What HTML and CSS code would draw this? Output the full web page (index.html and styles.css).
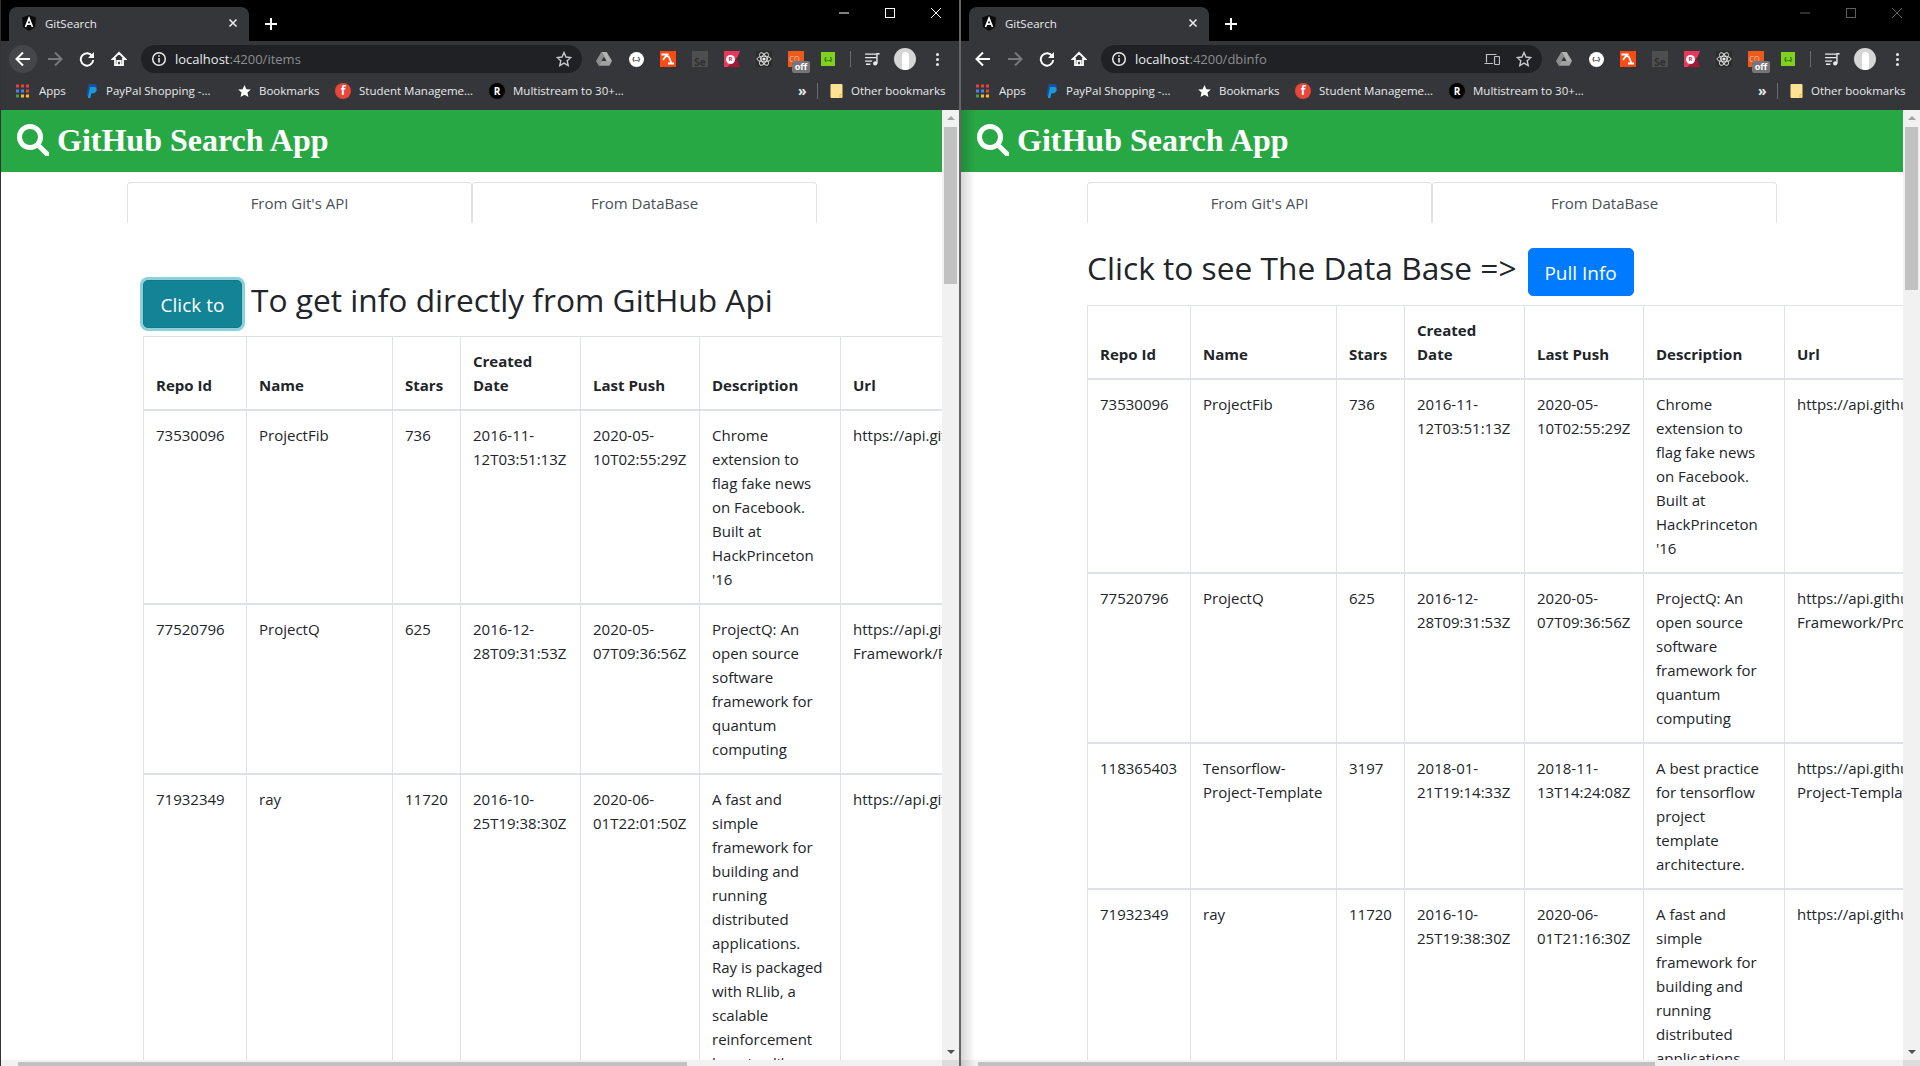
FILE: index.html
```html
<!DOCTYPE html>
<html lang="en">
<head>
<meta charset="utf-8">
<title>GitSearch</title>
<link rel="stylesheet" href="styles.css">
</head>
<body>
<svg class="defs" xmlns="http://www.w3.org/2000/svg">
  <symbol id="i-ng" viewBox="0 0 16 16"><path d="M8 0 1 2.500 2 12l6 4 6-4 1-9.500z" fill="#0b0b0b"/><path d="M4.500 12 8 3.200 11.500 12M5.700 9.200h4.600" fill="none" stroke="#fff" stroke-width="1.700"/></symbol>
  <symbol id="i-x" viewBox="0 0 10 10"><path d="M1.500 1.500l7 7M8.500 1.500l-7 7" stroke="#e8eaed" stroke-width="1.600" fill="none"/></symbol>
  <symbol id="i-plus" viewBox="0 0 14 14"><path d="M7 1v12M1 7h12" stroke="#fff" stroke-width="2" fill="none"/></symbol>
  <symbol id="i-back" viewBox="0 0 16 16"><path d="M15 8H2M8 1.500 1.500 8 8 14.500" fill="none" stroke="currentColor" stroke-width="2"/></symbol>
  <symbol id="i-fwd" viewBox="0 0 16 16"><path d="M1 8h13M8 1.500 14.500 8 8 14.500" fill="none" stroke="currentColor" stroke-width="2"/></symbol>
  <symbol id="i-reload" viewBox="0 0 16 16"><path d="M13.300 5.200A6.200 6.200 0 1 0 14.200 9" fill="none" stroke="currentColor" stroke-width="2"/><path d="M15 1v6H9z" fill="currentColor"/></symbol>
  <symbol id="i-home" viewBox="0 0 18 18"><path d="M9 2 2 9h2.500v7h9V9H16zM7 16v-5h4v5" fill="none" stroke="currentColor" stroke-width="2" stroke-linejoin="miter"/></symbol>
  <symbol id="i-info" viewBox="0 0 16 16"><circle cx="8" cy="8" r="6.300" fill="none" stroke="currentColor" stroke-width="1.500"/><path d="M8 7v4.500M8 4.200v1.500" stroke="currentColor" stroke-width="1.600"/></symbol>
  <symbol id="i-star" viewBox="0 0 16 16"><path d="M8 1.500l2 4.500 4.800.5-3.600 3.200 1 4.800L8 12.100 3.800 14.500l1-4.800L1.200 6.500 6 6z" fill="none" stroke="currentColor" stroke-width="1.400"/></symbol>
  <symbol id="i-device" viewBox="0 0 16 14"><path d="M2.500 10.500V2.500h10M.5 11.500h8.500" fill="none" stroke="#bdc1c6" stroke-width="1.200"/><rect x="10.500" y="4.500" width="5" height="8" rx=".8" fill="none" stroke="#bdc1c6" stroke-width="1.200"/></symbol>
  <symbol id="i-drive" viewBox="0 0 16 14"><path d="M5.300 0h5.400l5.300 9h-5.400z" fill="#b0b0b0"/><path d="M5.300 0 8 4.600 2.700 13.800 0 9z" fill="#8e8e8e"/><path d="M5.400 9H16l-2.700 4.800H2.700z" fill="#a0a0a0"/></symbol>
  <symbol id="i-slash" viewBox="0 0 16 16"><rect width="16" height="16" fill="#ff4a12"/><path d="M1.500 3.500h5.500L3 9M8 3l-1.500 3M8.500 5l3 7.500M8 12.500h6" fill="none" stroke="#fff" stroke-width="1.800"/></symbol>
  <symbol id="i-react" viewBox="0 0 16 16"><rect width="16" height="16" fill="#2c2c2c"/><circle cx="8" cy="8" r="1.600" fill="#eee"/><g fill="none" stroke="#e6e6e6" stroke-width=".9"><ellipse cx="8" cy="8" rx="7" ry="2.800"/><ellipse cx="8" cy="8" rx="7" ry="2.800" transform="rotate(60 8 8)"/><ellipse cx="8" cy="8" rx="7" ry="2.800" transform="rotate(120 8 8)"/></g></symbol>
  <symbol id="i-list" viewBox="0 0 18 16"><path d="M0 2.500h13M0 6.500h13M0 10.500h8M1 14h5" stroke="#e8eaed" stroke-width="1.500" fill="none"/><path d="M13.500 13V2h3" stroke="#e8eaed" stroke-width="1.600" fill="none"/><circle cx="11.500" cy="13" r="2.400" fill="#e8eaed"/></symbol>
  <symbol id="i-apps" viewBox="0 0 13 13"><g fill="#ea4335"><rect width="3" height="3"/><rect x="5" width="3" height="3"/><rect x="10" width="3" height="3"/></g><g fill="#4285f4"><rect y="5" width="3" height="3"/><rect x="5" y="5" width="3" height="3"/></g><rect x="10" y="5" width="3" height="3" fill="#ea4335"/><g fill="#34a853"><rect y="10" width="3" height="3"/></g><g fill="#fbbc05"><rect x="5" y="10" width="3" height="3"/><rect x="10" y="10" width="3" height="3"/></g></symbol>
  <symbol id="i-paypal" viewBox="0 0 12 14"><path d="M3 0h5c3 0 4 2 3.300 4.200C10.600 6.500 9 7.500 6.500 7.500H5L4 12H1z" fill="#1b4f9c"/><path d="M4.500 3h4c2 0 3 1.500 2.500 3.400-.5 2-2 3-4 3H5.700L5 14H2.300z" fill="#169bd7"/></symbol>
  <symbol id="i-bstar" viewBox="0 0 14 14"><path d="M7 .5l2 4.500 4.800.5-3.600 3.200 1 4.800L7 11.100 2.800 13.500l1-4.800L.2 5.500 5 5z" fill="#fff"/></symbol>
  <symbol id="i-folder" viewBox="0 0 12 14"><path d="M0 1a1 1 0 0 1 1-1h10a1 1 0 0 1 1 1v12a1 1 0 0 1-1 1H1a1 1 0 0 1-1-1z" fill="#fde293"/><path d="M12 10.500H9.500V14" fill="none" stroke="#d9b84f" stroke-width=".8"/></symbol>
  <symbol id="i-search" viewBox="0 0 32 32"><circle cx="13" cy="13" r="10.500" fill="none" stroke="#fff" stroke-width="5"/><path d="M21 21l9 9" stroke="#fff" stroke-width="5" stroke-linecap="round"/></symbol>
  <symbol id="i-min" viewBox="0 0 10 10"><path d="M0 5h10" stroke="currentColor" stroke-width="1"/></symbol>
  <symbol id="i-max" viewBox="0 0 10 10"><rect x=".5" y=".5" width="9" height="9" fill="none" stroke="currentColor"/></symbol>
  <symbol id="i-close" viewBox="0 0 10 10"><path d="M0 0l10 10M10 0 0 10" stroke="currentColor" stroke-width="1"/></symbol>
</svg>

<div class="desktop">
  <section class="window window-left">
    <div class="chrome">
      <div class="tabstrip">
        <div class="tab">
          <svg class="fav"><use href="#i-ng"/></svg>
          <span class="tab-title">GitSearch</span>
          <svg class="tab-x"><use href="#i-x"/></svg>
        </div>
        <svg class="newtab"><use href="#i-plus"/></svg>
        <div class="winctl">
          <svg class="ctl ctl-min"><use href="#i-min"/></svg>
          <svg class="ctl"><use href="#i-max"/></svg>
          <svg class="ctl"><use href="#i-close"/></svg>
        </div>
      </div>
      <div class="toolbar">
        <span class="navbtn navbtn-hover"><svg class="nav-ico"><use href="#i-back"/></svg></span>
        <span class="navbtn navbtn-off"><svg class="nav-ico"><use href="#i-fwd"/></svg></span>
        <span class="navbtn"><svg class="nav-ico"><use href="#i-reload"/></svg></span>
        <span class="navbtn"><svg class="nav-ico"><use href="#i-home"/></svg></span>
        <div class="omnibox">
          <svg class="omni-ico"><use href="#i-info"/></svg>
          <span class="url"><span class="url-host">localhost</span>:4200/items</span>
          <svg class="omni-star"><use href="#i-star"/></svg>
        </div>
        <div class="exts">
          <span class="ext"><svg class="ext-drive"><use href="#i-drive"/></svg></span>
          <span class="ext"><span class="ext-json">{...}</span></span>
          <span class="ext"><svg class="ext-orange"><use href="#i-slash"/></svg></span>
          <span class="ext"><span class="ext-se">Se</span></span>
          <span class="ext"><span class="ext-red"><span class="ext-red-in">R</span></span></span>
          <span class="ext"><svg class="ext-react"><use href="#i-react"/></svg></span>
          <span class="ext"><span class="ext-co">co<span class="ext-off">off</span></span></span>
          <span class="ext"><span class="ext-green">{...}</span></span>
        </div>
        <span class="tool-sep"></span>
        <span class="ext ext-first"><svg class="ext-list"><use href="#i-list"/></svg></span>
        <span class="ext"><span class="avatar"><span class="avatar-in"></span></span></span>
        <span class="ext"><span class="menu"><i></i><i></i><i></i></span></span>
      </div>
      <div class="bookmarks">
        <span class="bm"><svg class="bm-ico bm-ico-wide"><use href="#i-apps"/></svg>Apps</span>
        <span class="bm"><svg class="bm-ico"><use href="#i-paypal"/></svg>PayPal Shopping -...</span>
        <span class="bm"><svg class="bm-ico"><use href="#i-bstar"/></svg>Bookmarks</span>
        <span class="bm"><span class="bm-f">f</span>Student Manageme...</span>
        <span class="bm"><span class="bm-r">R</span>Multistream to 30+...</span>
        <span class="bm-more">»</span>
        <span class="bm-sep"></span>
        <span class="bm"><svg class="bm-ico"><use href="#i-folder"/></svg>Other bookmarks</span>
      </div>
    </div>
    <div class="viewport">
      <div class="view-row">
        <main class="page">
          <header class="app-bar"><svg class="app-ico"><use href="#i-search"/></svg><h1 class="app-title">GitHub Search App</h1></header>
          <nav class="tabs"><a class="tab-link">From Git's API</a><a class="tab-link">From DataBase</a></nav>
          <div class="action action-api">
            <button class="btn btn-info">Click to</button>
            <h2 class="action-title">To get info directly from GitHub Api</h2>
          </div>
          <div class="table-wrap table-wrap-api">
            <table class="repos">
              <colgroup><col class="c1"><col class="c2"><col class="c3"><col class="c4"><col class="c5"><col class="c6"><col class="c7"></colgroup>
              <thead><tr><th>Repo Id</th><th>Name</th><th>Stars</th><th>Created<br>Date</th><th>Last Push</th><th>Description</th><th>Url</th></tr></thead>
              <tbody><tr><td>73530096</td><td>ProjectFib</td><td>736</td><td>2016-11-<br>12T03:51:13Z</td><td>2020-05-<br>10T02:55:29Z</td><td>Chrome<br>extension to<br>flag fake news<br>on Facebook.<br>Built at<br>HackPrinceton<br>'16</td><td>https://api.github.com/repos/ProjectFib/ProjectFib</td></tr></tbody>
              <tbody><tr><td>77520796</td><td>ProjectQ</td><td>625</td><td>2016-12-<br>28T09:31:53Z</td><td>2020-05-<br>07T09:36:56Z</td><td>ProjectQ: An<br>open source<br>software<br>framework for<br>quantum<br>computing</td><td>https://api.github.com/repos/ProjectQ-<br>Framework/ProjectQ</td></tr></tbody>
              <tbody><tr><td>71932349</td><td>ray</td><td>11720</td><td>2016-10-<br>25T19:38:30Z</td><td>2020-06-<br>01T22:01:50Z</td><td>A fast and<br>simple<br>framework for<br>building and<br>running<br>distributed<br>applications.<br>Ray is packaged<br>with RLlib, a<br>scalable<br>reinforcement<br>learning library</td><td>https://api.github.com/repos/ray</td></tr></tbody>
            </table>
          </div>
        </main>
        <div class="vbar"><span class="arrow-up"></span><span class="vthumb vthumb-api"></span><span class="arrow-down"></span></div>
      </div>
      <div class="hbar"><span class="hthumb hthumb-api"></span><span class="hcorner"></span></div>
    </div>
  </section>

  <section class="window window-right">
    <div class="chrome">
      <div class="tabstrip">
        <div class="tab">
          <svg class="fav"><use href="#i-ng"/></svg>
          <span class="tab-title">GitSearch</span>
          <svg class="tab-x"><use href="#i-x"/></svg>
        </div>
        <svg class="newtab"><use href="#i-plus"/></svg>
        <div class="winctl winctl-dim">
          <svg class="ctl ctl-min"><use href="#i-min"/></svg>
          <svg class="ctl"><use href="#i-max"/></svg>
          <svg class="ctl"><use href="#i-close"/></svg>
        </div>
      </div>
      <div class="toolbar">
        <span class="navbtn"><svg class="nav-ico"><use href="#i-back"/></svg></span>
        <span class="navbtn navbtn-off"><svg class="nav-ico"><use href="#i-fwd"/></svg></span>
        <span class="navbtn"><svg class="nav-ico"><use href="#i-reload"/></svg></span>
        <span class="navbtn"><svg class="nav-ico"><use href="#i-home"/></svg></span>
        <div class="omnibox">
          <svg class="omni-ico"><use href="#i-info"/></svg>
          <span class="url"><span class="url-host">localhost</span>:4200/dbinfo</span>
          <svg class="omni-device"><use href="#i-device"/></svg>
          <svg class="omni-star omni-star-next"><use href="#i-star"/></svg>
        </div>
        <div class="exts">
          <span class="ext"><svg class="ext-drive"><use href="#i-drive"/></svg></span>
          <span class="ext"><span class="ext-json">{...}</span></span>
          <span class="ext"><svg class="ext-orange"><use href="#i-slash"/></svg></span>
          <span class="ext"><span class="ext-se">Se</span></span>
          <span class="ext"><span class="ext-red"><span class="ext-red-in">R</span></span></span>
          <span class="ext"><svg class="ext-react"><use href="#i-react"/></svg></span>
          <span class="ext"><span class="ext-co">co<span class="ext-off">off</span></span></span>
          <span class="ext"><span class="ext-green">{...}</span></span>
        </div>
        <span class="tool-sep"></span>
        <span class="ext ext-first"><svg class="ext-list"><use href="#i-list"/></svg></span>
        <span class="ext"><span class="avatar"><span class="avatar-in"></span></span></span>
        <span class="ext"><span class="menu"><i></i><i></i><i></i></span></span>
      </div>
      <div class="bookmarks">
        <span class="bm"><svg class="bm-ico bm-ico-wide"><use href="#i-apps"/></svg>Apps</span>
        <span class="bm"><svg class="bm-ico"><use href="#i-paypal"/></svg>PayPal Shopping -...</span>
        <span class="bm"><svg class="bm-ico"><use href="#i-bstar"/></svg>Bookmarks</span>
        <span class="bm"><span class="bm-f">f</span>Student Manageme...</span>
        <span class="bm"><span class="bm-r">R</span>Multistream to 30+...</span>
        <span class="bm-more">»</span>
        <span class="bm-sep"></span>
        <span class="bm"><svg class="bm-ico"><use href="#i-folder"/></svg>Other bookmarks</span>
      </div>
    </div>
    <div class="viewport">
      <div class="view-row">
        <main class="page">
          <header class="app-bar"><svg class="app-ico"><use href="#i-search"/></svg><h1 class="app-title">GitHub Search App</h1></header>
          <nav class="tabs"><a class="tab-link">From Git's API</a><a class="tab-link">From DataBase</a></nav>
          <div class="action action-db">
            <h2 class="action-title">Click to see The Data Base =&gt;</h2>
            <button class="btn btn-primary">Pull Info</button>
          </div>
          <div class="table-wrap table-wrap-db">
            <table class="repos">
              <colgroup><col class="c1"><col class="c2"><col class="c3"><col class="c4"><col class="c5"><col class="c6"><col class="c7"></colgroup>
              <thead><tr><th>Repo Id</th><th>Name</th><th>Stars</th><th>Created<br>Date</th><th>Last Push</th><th>Description</th><th>Url</th></tr></thead>
              <tbody><tr><td>73530096</td><td>ProjectFib</td><td>736</td><td>2016-11-<br>12T03:51:13Z</td><td>2020-05-<br>10T02:55:29Z</td><td>Chrome<br>extension to<br>flag fake news<br>on Facebook.<br>Built at<br>HackPrinceton<br>'16</td><td>https://api.github.com/repos/ProjectFib/ProjectFib</td></tr></tbody>
              <tbody><tr><td>77520796</td><td>ProjectQ</td><td>625</td><td>2016-12-<br>28T09:31:53Z</td><td>2020-05-<br>07T09:36:56Z</td><td>ProjectQ: An<br>open source<br>software<br>framework for<br>quantum<br>computing</td><td>https://api.github.com/repos/ProjectQ-<br>Framework/ProjectQ</td></tr></tbody>
              <tbody><tr><td>118365403</td><td>Tensorflow-<br>Project-Template</td><td>3197</td><td>2018-01-<br>21T19:14:33Z</td><td>2018-11-<br>13T14:24:08Z</td><td>A best practice<br>for tensorflow<br>project<br>template<br>architecture.</td><td>https://api.github.com/repos/Tensorflow-<br>Project-Template</td></tr></tbody>
              <tbody><tr><td>71932349</td><td>ray</td><td>11720</td><td>2016-10-<br>25T19:38:30Z</td><td>2020-06-<br>01T21:16:30Z</td><td>A fast and<br>simple<br>framework for<br>building and<br>running<br>distributed<br>applications.</td><td>https://api.github.com/repos/ray</td></tr></tbody>
            </table>
          </div>
        </main>
        <div class="vbar"><span class="arrow-up"></span><span class="vthumb vthumb-db"></span><span class="arrow-down"></span></div>
      </div>
      <div class="hbar"><span class="hthumb hthumb-db"></span><span class="hcorner"></span></div>
    </div>
  </section>
</div>
</body>
</html>
```
FILE: styles.css
```css
* { box-sizing: border-box; }
html, body { margin: 0; height: 100%; overflow: hidden; }
body { font-family: "Open Sans", "Liberation Sans", sans-serif; color: #212529; background: #000; }
.defs { display: none; }
.desktop { display: flex; height: 1066px; width: 1920px; }
.window { display: flex; flex-direction: column; height: 1066px; width: 959px; flex: none; }
.window-left { border-left: 1px solid #333; width: 959px; }
.window-right { width: 961px; border-left: 2px solid #666; position: relative; }

.chrome { flex: none; height: 110px; display: flex; flex-direction: column; background: #35363a; color: #e8eaed; font-size: 11.5px; }
.tabstrip { height: 41px; background: #000; display: flex; align-items: flex-end; padding-left: 8px; position: relative; }
.tab { width: 240px; height: 34px; background: #35363a; border-radius: 8px 8px 0 0; display: flex; align-items: center; padding: 0 11px 2px 12px; }
.fav { width: 16px; height: 16px; margin-right: 8px; flex: none; }
.tab-title { flex: 1; color: #e8eaed; }
.tab-x { width: 10px; height: 10px; margin-bottom: 0; }
.newtab { width: 14px; height: 14px; margin: 0 0 10px 15px; }
.winctl { margin-left: auto; display: flex; gap: 36px; align-self: flex-start; padding: 8px 18px 0 0; color: #fff; }
.winctl-dim { color: #5f5f5f; }
.ctl { width: 10px; height: 10px; display: block; }
.ctl-min { width: 10px; }

.toolbar { height: 34px; display: flex; align-items: center; padding: 2px 0 0 8px; }
.navbtn { width: 28px; height: 28px; margin-right: 4px; border-radius: 50%; display: flex; align-items: center; justify-content: center; color: #fff; flex: none; }
.navbtn-hover { background: #45464a; }
.navbtn-off { color: #77787b; }
.nav-ico { width: 16px; height: 16px; }
.omnibox { width: 441px; height: 28px; margin-left: 4px; border-radius: 14px; background: #202124; display: flex; align-items: center; padding: 0 10px; flex: none; }
.omni-ico { width: 16px; height: 16px; color: #e8eaed; flex: none; }
.url { margin-left: 8px; font-size: 13px; color: #8c8e92; }
.url-host { color: #e8eaed; }
.omni-star { width: 16px; height: 16px; margin-left: auto; color: #c4c7cc; flex: none; }
.omni-star-next { margin-left: 16px; }
.omni-device { width: 16px; height: 14px; margin-left: auto; }
.exts { display: flex; margin-left: 6px; flex: none; }
.ext { width: 32px; height: 28px; display: flex; align-items: center; justify-content: center; flex: none; }
.ext-first { margin-left: 6px; }
.ext-drive { width: 16px; height: 14px; }
.ext-json { width: 15px; height: 15px; border-radius: 50%; background: #fff; color: #222; font-size: 6px; font-weight: 700; letter-spacing: -.5px; display: flex; align-items: center; justify-content: center; overflow: hidden; }
.ext-orange { width: 16px; height: 16px; }
.ext-se { width: 16px; height: 16px; background: #4e4e4e; color: #2f2f2f; font-size: 10px; font-weight: 700; display: flex; align-items: flex-end; justify-content: center; line-height: 1; }
.ext-red { width: 16px; height: 16px; background: linear-gradient(135deg, #e8385c 60%, #a3173a 60%); display: flex; align-items: center; padding-left: 2px; clip-path: polygon(0 0, 100% 0, 80% 50%, 100% 100%, 0 100%); }
.ext-red-in { width: 9px; height: 9px; border-radius: 50%; background: #fff; color: #d02a4e; font-size: 6px; font-weight: 700; line-height: 9px; text-align: center; }
.ext-react { width: 16px; height: 16px; }
.ext-co { width: 16px; height: 16px; background: #ee5a1c; color: #ffb38a; font-size: 10px; line-height: 14px; text-align: left; position: relative; padding-left: 1px; }
.ext-off { position: absolute; left: 4px; top: 10px; width: 18px; height: 12px; border-radius: 2px; background: #75767a; color: #fff; font-size: 9px; font-weight: 700; line-height: 12px; text-align: center; }
.ext-green { width: 14px; height: 14px; background: #7ed321; color: #23440a; font-size: 6px; font-weight: 700; letter-spacing: -.5px; display: flex; align-items: center; justify-content: center; overflow: hidden; }
.tool-sep { width: 1px; height: 16px; background: #6a6b6e; margin-left: 6px; flex: none; }
.ext-list { width: 16px; height: 14px; }
.avatar { width: 22px; height: 22px; border-radius: 50%; background: #d6d6d6; display: flex; justify-content: center; overflow: hidden; }
.avatar-in { width: 7px; height: 18px; margin-top: 4px; border-radius: 4px 4px 2px 2px; background: #fff; }
.menu { display: flex; flex-direction: column; gap: 2px; }
.menu i { width: 3px; height: 3px; border-radius: 50%; background: #e8eaed; display: block; }

.bookmarks { height: 35px; display: grid; grid-template-columns: 69px 153px 97px 154px 309px 19px 13px 1fr; align-items: center; padding-left: 15px; padding-bottom: 4px; color: #e8eaed; }
.bm { display: flex; align-items: center; white-space: nowrap; }
.bm-ico { width: 13px; height: 14px; margin-right: 8px; flex: none; }
.bm-ico-wide { margin-right: 10px; }
.bm-f, .bm-r { width: 16px; height: 16px; border-radius: 50%; margin-right: 8px; display: flex; align-items: center; justify-content: center; font-weight: 700; flex: none; }
.bm-f { background: #e8453c; color: #fff; font-size: 12px; }
.bm-r { background: #000; color: #fff; font-size: 10px; }
.bm-more { font-size: 14px; line-height: 1; font-weight: 700; }
.bm-sep { width: 1px; height: 16px; background: #6a6b6e; }

.viewport { flex: 1; min-height: 0; display: flex; flex-direction: column; position: relative; background: #fff; }
.window-right .viewport::before { content: ""; position: absolute; left: 0; top: 0; bottom: 0; width: 14px; background: linear-gradient(90deg, rgba(0,0,0,.16), rgba(0,0,0,0)); z-index: 2; }
.view-row { flex: 1; min-height: 0; display: flex; }
.page { flex: 1; min-width: 0; overflow: hidden; }
.vbar { width: 17px; flex: none; background: #f1f1f1; position: relative; display: flex; flex-direction: column; align-items: center; }
.arrow-up { width: 0; height: 0; margin-top: 6px; border: 4px solid transparent; border-top: 0; border-bottom: 4px solid #a3a3a3; }
.vthumb { width: 13px; background: #c1c1c1; margin-top: 7px; }
.vthumb-api { height: 157px; }
.vthumb-db { height: 163px; }
.arrow-down { width: 0; height: 0; margin-top: auto; margin-bottom: 6px; border: 4px solid transparent; border-bottom: 0; border-top: 4px solid #505050; }
.hbar { height: 6px; flex: none; background: #f1f1f1; display: flex; padding-top: 2px; position: relative; }
.hthumb { height: 4px; background: #c1c1c1; margin-left: 17px; }
.hthumb-api { width: 669px; }
.hthumb-db { width: 677px; }
.hcorner { margin-left: auto; width: 17px; height: 6px; margin-top: -2px; background: #dcdcdc; }

.app-bar { height: 62px; background: #28a745; display: flex; align-items: center; padding-left: 16px; }
.app-ico { width: 32px; height: 32px; flex: none; margin-top: -2px; }
.app-title { margin: -2px 0 0 8px; font-family: "Liberation Serif", serif; font-size: 32px; font-weight: 700; color: #fff; line-height: 1.2; }
.tabs { display: flex; width: 690px; margin: 10px 0 0 126px; height: 41px; }
.tab-link { flex: 1; border: 1px solid #dee2e6; border-bottom: 0; border-radius: 4px 4px 0 0; text-align: center; color: #495057; font-size: 15px; line-height: 40px; }
.action { display: flex; align-items: baseline; }
.action-api { margin: 57px 0 0 142px; gap: 9px; }
.action-db { margin: 25px 0 0 126px; gap: 11px; }
.action-title { margin: 0; font-size: 31.7px; font-weight: 400; color: #212529; line-height: 1.2; white-space: nowrap; }
.btn { height: 48px; border-radius: 5px; border: 1px solid; color: #fff; font-family: inherit; font-size: 19px; padding: 2px 0 0; flex: none; white-space: nowrap; }
.btn-info { width: 99px; background: #138496; border-color: #117a8b; box-shadow: 0 0 0 3px rgba(23,162,184,.5); }
.btn-primary { width: 106px; background: #007bff; border-color: #007bff; }
.table-wrap { overflow: hidden; }
.table-wrap-api { margin: 8px 0 0 142px; }
.table-wrap-db { margin: 9px 0 0 126px; }
.repos { border-collapse: collapse; table-layout: fixed; width: 1100px; font-size: 15px; line-height: 24px; color: #212529; }
.c1 { width: 103px; } .c2 { width: 146px; } .c3 { width: 68px; } .c4 { width: 120px; } .c5 { width: 119px; } .c6 { width: 141px; } .c7 { width: 403px; }
.repos th, .repos td { border: 1px solid #dee2e6; padding: 12px 12px 12px; text-align: left; white-space: nowrap; overflow: hidden; vertical-align: top; font-weight: 400; }
.repos th { vertical-align: bottom; border-bottom: 2px solid #dee2e6; font-weight: 700; }
.repos tbody + tbody { border-top: 2px solid #dee2e6; }
```
